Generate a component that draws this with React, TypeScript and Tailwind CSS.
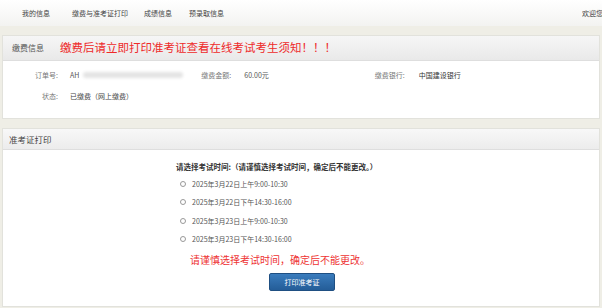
import React from 'react';

const font = { fontFamily: '"Noto Sans CJK SC", "Liberation Sans", sans-serif' };

export default function App() {
  const times = [
    '2025年3月22日上午9:00-10:30',
    '2025年3月22日下午14:30-16:00',
    '2025年3月23日上午9:00-10:30',
    '2025年3月23日下午14:30-16:00',
  ];
  return (
    <div className="w-[602px] h-[308px] overflow-hidden bg-[#efeee6] text-[#333]" style={font}>
      <div className="h-[26px] flex items-center bg-gradient-to-b from-white to-[#f3f3f1] text-[7px] text-[#444] relative">
        <span className="ml-[22px]">我的信息</span>
        <span className="ml-[22px]">缴费与准考证打印</span>
        <span className="ml-[16px]">成绩信息</span>
        <span className="ml-[17px]">预录取信息</span>
        <span className="ml-auto mr-[-8px] w-[28px] whitespace-nowrap overflow-hidden">欢迎您</span>
      </div>
      <div className="h-[9px]" />
      <div className="mx-[2px] border border-[#e2e2dc] bg-white">
        <div className="h-[25px] flex items-center bg-gradient-to-b from-[#f6f6f6] to-[#e9e9e9] border-b border-[#dedede]">
          <span className="ml-[9px] text-[8px] text-[#555]">缴费信息</span>
          <span className="ml-[16px] text-[11.5px] text-[#ee2a2a] leading-none">缴费后请立即打印准考证查看在线考试考生须知！！！</span>
        </div>
        <div className="h-[57px] text-[7px] relative">
          <div className="flex items-center pt-[9px]">
            <span className="w-[55px] text-right text-[#777]">订单号:</span>
            <span className="ml-[12px] text-[#555]">AH</span>
            <span className="ml-[4px] w-[100px] h-[6px] bg-[#e4e4e4] rounded-sm blur-[1.5px]" />
            <span className="ml-[18px] text-[#777]">缴费金额:</span>
            <span className="ml-[13px] text-[#555]">60.00元</span>
            <span className="ml-[106px] text-[#777]">缴费银行:</span>
            <span className="ml-[14px] text-[#333]">中国建设银行</span>
          </div>
          <div className="flex items-center mt-[10px]">
            <span className="w-[55px] text-right text-[#777]">状态:</span>
            <span className="ml-[12px] text-[#444]">已缴费（网上缴费）</span>
          </div>
        </div>
      </div>
      <div className="h-[9px]" />
      <div className="mx-[2px] border border-[#e2e2dc] bg-white">
        <div className="h-[21px] flex items-center bg-gradient-to-b from-[#f8f8f8] to-[#ececec] border-b border-[#dedede]">
          <span className="ml-[6px] text-[8.5px] text-[#444]">准考证打印</span>
        </div>
        <div className="h-[156px] relative">
          <div className="pl-[173px] pt-[11px] text-[7.5px] text-[#333] font-bold">
            请选择考试时间:（请谨慎选择考试时间，确定后不能更改。）
          </div>
          <div className="pl-[177px] mt-[6px] flex flex-col gap-[7.5px]">
            {times.map((t) => (
              <label key={t} className="flex items-center h-[11px] text-[7px] text-[#555]">
                <span className="w-[6px] h-[6px] rounded-full border border-[#999] bg-white" />
                <span className="ml-[6px]">{t}</span>
              </label>
            ))}
          </div>
          <div className="pl-[187px] mt-[7px] text-[10px] text-[#ee3333]">
            请谨慎选择考试时间，确定后不能更改。
          </div>
          <div className="pl-[266px] mt-[6px]">
            <button className="w-[66px] h-[18px] rounded-[2px] bg-gradient-to-b from-[#3a7cbd] to-[#245d98] border border-[#1f4f82] text-white text-[7px] flex items-center justify-center">
              打印准考证
            </button>
          </div>
        </div>
      </div>
    </div>
  );
}
